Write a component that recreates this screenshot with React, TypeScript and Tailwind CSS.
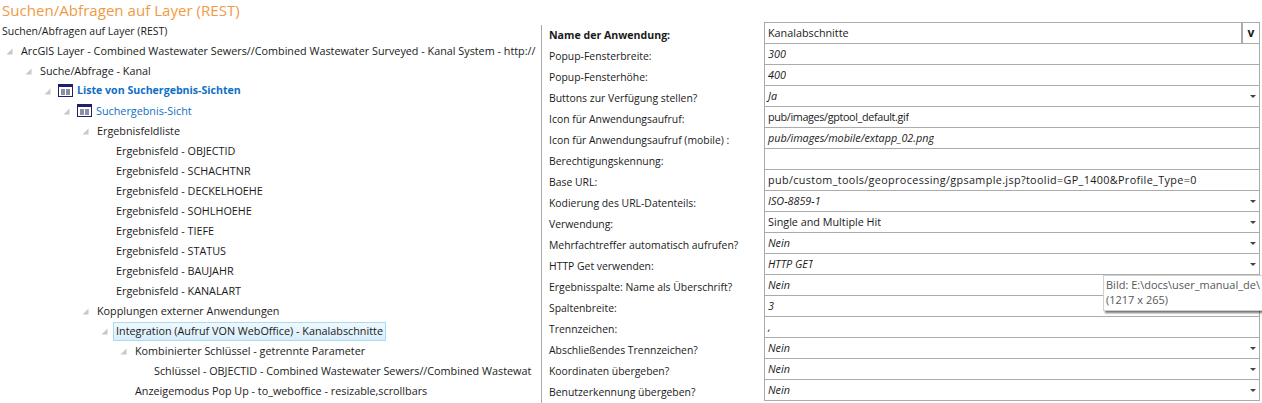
type TreeRow = {
  text: string;
  indent: number;
  arrow?: boolean;
  icon?: boolean;
  tone?: "bold" | "link" | "selected";
};

type FormRow = {
  label: string;
  value?: string;
  italic?: boolean;
  select?: boolean;
  bold?: boolean;
  button?: boolean;
  tracking?: string;
};

const treeRows: TreeRow[] = [
  { text: "ArcGIS Layer - Combined Wastewater Sewers//Combined Wastewater Surveyed - Kanal System - http://", indent: 0, arrow: true },
  { text: "Suche/Abfrage - Kanal", indent: 1, arrow: true },
  { text: "Liste von Suchergebnis-Sichten", indent: 2, arrow: true, icon: true, tone: "bold" },
  { text: "Suchergebnis-Sicht", indent: 3, arrow: true, icon: true, tone: "link" },
  { text: "Ergebnisfeldliste", indent: 4, arrow: true },
  { text: "Ergebnisfeld - OBJECTID", indent: 5 },
  { text: "Ergebnisfeld - SCHACHTNR", indent: 5 },
  { text: "Ergebnisfeld - DECKELHOEHE", indent: 5 },
  { text: "Ergebnisfeld - SOHLHOEHE", indent: 5 },
  { text: "Ergebnisfeld - TIEFE", indent: 5 },
  { text: "Ergebnisfeld - STATUS", indent: 5 },
  { text: "Ergebnisfeld - BAUJAHR", indent: 5 },
  { text: "Ergebnisfeld - KANALART", indent: 5 },
  { text: "Kopplungen externer Anwendungen", indent: 4, arrow: true },
  { text: "Integration (Aufruf VON WebOffice) - Kanalabschnitte", indent: 5, arrow: true, tone: "selected" },
  { text: "Kombinierter Schlüssel - getrennte Parameter", indent: 6, arrow: true },
  { text: "Schlüssel - OBJECTID - Combined Wastewater Sewers//Combined Wastewat", indent: 7 },
  { text: "Anzeigemodus Pop Up - to_weboffice - resizable,scrollbars", indent: 6 },
];

const formRows: FormRow[] = [
  { label: "Name der Anwendung:", value: "Kanalabschnitte", bold: true, button: true },
  { label: "Popup-Fensterbreite:", value: "300", italic: true },
  { label: "Popup-Fensterhöhe:", value: "400", italic: true },
  { label: "Buttons zur Verfügung stellen?", value: "Ja", italic: true, select: true },
  { label: "Icon für Anwendungsaufruf:", value: "pub/images/gptool_default.gif", tracking: "tracking-[-0.35px]" },
  { label: "Icon für Anwendungsaufruf (mobile) :", value: "pub/images/mobile/extapp_02.png", italic: true },
  { label: "Berechtigungskennung:" },
  { label: "Base URL:", value: "pub/custom_tools/geoprocessing/gpsample.jsp?toolid=GP_1400&Profile_Type=0", tracking: "tracking-[0.36px]" },
  { label: "Kodierung des URL-Datenteils:", value: "ISO-8859-1", italic: true, select: true },
  { label: "Verwendung:", value: "Single and Multiple Hit", select: true },
  { label: "Mehrfachtreffer automatisch aufrufen?", value: "Nein", italic: true, select: true },
  { label: "HTTP Get verwenden:", value: "HTTP GET", italic: true, select: true },
  { label: "Ergebnisspalte: Name als Überschrift?", value: "Nein", italic: true, select: true },
  { label: "Spaltenbreite:", value: "3", italic: true },
  { label: "Trennzeichen:", value: ",", italic: true },
  { label: "Abschließendes Trennzeichen?", value: "Nein", italic: true, select: true },
  { label: "Koordinaten übergeben?", value: "Nein", italic: true, select: true },
  { label: "Benutzerkennung übergeben?", value: "Nein", italic: true, select: true },
];

const Arrow = () => (
  <svg width="7" height="7" viewBox="0 0 7 7" className="shrink-0">
    <path d="M6.5 0.5V6.5H0.5Z" fill="#c8c8c8" />
  </svg>
);

const TableIcon = () => (
  <svg width="16" height="14" viewBox="0 0 16 14" className="shrink-0">
    <rect x="0.5" y="0.5" width="14" height="12" fill="#fff" stroke="#1f1f6e" />
    <rect x="1" y="1" width="13" height="2" fill="#1f1f6e" />
    <rect x="3" y="5" width="4" height="6" fill="#8a8fa8" />
    <rect x="8" y="5" width="4" height="6" fill="#8a8fa8" />
  </svg>
);

function TreeItem({ row }: { row: TreeRow }) {
  const textClass =
    row.tone === "bold"
      ? "text-[10.6px] font-bold text-[#0f6fc6]"
      : row.tone === "link"
        ? "text-[#0f6fc6]"
        : "text-[#1a1a1a]";
  return (
    <div className="flex h-5 items-center whitespace-nowrap" style={{ paddingLeft: 6 + row.indent * 19 }}>
      <span className="flex w-[15px] shrink-0 items-center">{row.arrow && <Arrow />}</span>
      {row.icon && (
        <span className="-ml-[1px] mr-[3px] flex">
          <TableIcon />
        </span>
      )}
      <span
        className={
          row.tone === "selected"
            ? "-ml-[3px] flex h-[19px] items-center border border-[#a6dcf5] bg-gradient-to-b from-[#f0f8fd] to-[#d8eefb] px-[2px] text-[#1a1a1a]"
            : textClass
        }
      >
        {row.text}
      </span>
    </div>
  );
}

function Label({ row }: { row: FormRow }) {
  return (
    <div className="flex h-[21px] items-center whitespace-nowrap pl-[7px] text-[10.4px] text-[#1a1a1a]">
      <span className={row.bold ? "text-[10.6px] font-bold" : ""}>{row.label}</span>
    </div>
  );
}

function Field({ row }: { row: FormRow }) {
  return (
    <div className="flex h-[21px] items-center justify-between border-x border-b border-[#ababab]">
      <span className={`truncate pl-[3px] text-[#1a1a1a] ${row.italic ? "italic" : ""} ${row.tracking ?? ""}`}>{row.value}</span>
      {row.select && (
        <svg width="6" height="3" viewBox="0 0 6 3" className="mr-[3px] shrink-0">
          <path d="M0 0H6L3 3Z" fill="#444" />
        </svg>
      )}
      {row.button && (
        <span className="flex h-full w-[18px] shrink-0 items-center justify-center border-l-2 border-[#ababab] text-[12px] font-bold text-[#1a1a1a]">
          v
        </span>
      )}
    </div>
  );
}

export default function App() {
  return (
    <div className="relative h-[403px] w-[1262px] overflow-hidden bg-white font-['Open_Sans','Noto_Sans',sans-serif] text-[10.8px]">
      <div className="h-[22px] pl-[2px] text-[15.1px] leading-[20px] text-[#f09a45]">Suchen/Abfragen auf Layer (REST)</div>
      <div className="flex">
        <div className="w-[541px] shrink-0 overflow-hidden">
          <div className="flex h-[19px] items-center pl-[2px] pt-[1px] text-[10.5px] text-[#1a1a1a]">Suchen/Abfragen auf Layer (REST)</div>
          {treeRows.map((row) => (
            <TreeItem key={row.text} row={row} />
          ))}
        </div>
        <div className="mt-[3px] h-[378px] w-[223px] shrink-0 border-l border-[#ababab]">
          {formRows.map((row) => (
            <Label key={row.label} row={row} />
          ))}
        </div>
        <div className="w-[496px] shrink-0 border-t border-[#ababab]">
          {formRows.map((row) => (
            <Field key={row.label} row={row} />
          ))}
        </div>
      </div>
      <div className="absolute left-[1103px] top-[275px] h-[36px] w-[175px] border border-[#d0d0d0] bg-white pl-[2px] pt-[1px] text-[11px] leading-[15px] text-[#575757] shadow-[2px_2px_2px_rgba(0,0,0,0.55)]">
        <div className="whitespace-nowrap">Bild: E:\docs\user_manual_de\</div>
        <div>(1217 x 265)</div>
      </div>
    </div>
  );
}
